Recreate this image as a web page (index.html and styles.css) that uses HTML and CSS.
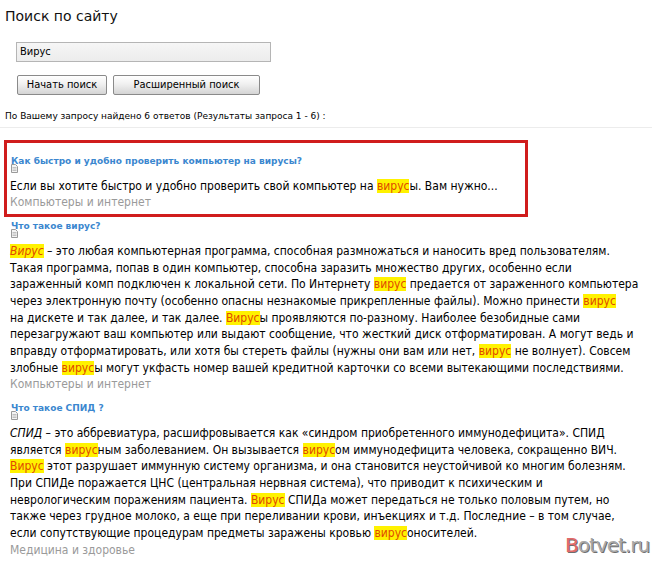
FILE: index.html
```html
<!DOCTYPE html>
<html lang="ru">
<head>
<meta charset="utf-8">
<title>Поиск по сайту</title>
<link rel="stylesheet" href="styles.css">
</head>
<body>
<div class="page">
  <h1 class="page-title">Поиск по сайту</h1>
  <form class="search-form">
    <div class="search-field">Вирус</div>
    <div class="search-buttons">
      <span class="btn btn-start">Начать поиск</span>
      <span class="btn btn-adv">Расширенный поиск</span>
    </div>
  </form>
  <p class="summary">По Вашему запросу найдено 6 ответов (Результаты запроса 1 - 6) :</p>
  <div class="separator"></div>

  <div class="results">
    <div class="result marked">
      <div class="result-title"><span class="doc-icon"><svg width="7" height="9" viewBox="0 0 7 9"><path d="M0.5 0.5h4l2 2v6h-6z" fill="#f4f4f4" stroke="#9a9a9a"/><path d="M1.5 3.5h4M1.5 5h4M1.5 6.5h4" stroke="#c0c0c0"/></svg></span>Как быстро и удобно проверить компьютер на вирусы?</div>
      <div class="result-text">Если вы хотите быстро и удобно проверить свой компьютер на <mark>вирус</mark>ы. Вам нужно...</div>
      <div class="result-cat">Компьютеры и интернет</div>
    </div>

    <div class="result">
      <div class="result-title"><span class="doc-icon"><svg width="7" height="9" viewBox="0 0 7 9"><path d="M0.5 0.5h4l2 2v6h-6z" fill="#f4f4f4" stroke="#9a9a9a"/><path d="M1.5 3.5h4M1.5 5h4M1.5 6.5h4" stroke="#c0c0c0"/></svg></span>Что такое вирус?</div>
      <div class="result-text"><mark><i>Вирус</i></mark> – это любая компьютерная программа, способная размножаться и наносить вред пользователям.<br>Такая программа, попав в один компьютер, способна заразить множество других, особенно если<br>зараженный комп подключен к локальной сети. По Интернету <mark>вирус</mark> предается от зараженного компьютера<br>через электронную почту (особенно опасны незнакомые прикрепленные файлы). Можно принести <mark>вирус</mark><br>на дискете и так далее, и так далее. <mark>Вирус</mark>ы проявляются по-разному. Наиболее безобидные сами<br>перезагружают ваш компьютер или выдают сообщение, что жесткий диск отформатирован. А могут ведь и<br>вправду отформатировать, или хотя бы стереть файлы (нужны они вам или нет, <mark>вирус</mark> не волнует). Совсем<br>злобные <mark>вирус</mark>ы могут укфасть номер вашей кредитной карточки со всеми вытекающими последствиями.</div>
      <div class="result-cat">Компьютеры и интернет</div>
    </div>

    <div class="result">
      <div class="result-title"><span class="doc-icon"><svg width="7" height="9" viewBox="0 0 7 9"><path d="M0.5 0.5h4l2 2v6h-6z" fill="#f4f4f4" stroke="#9a9a9a"/><path d="M1.5 3.5h4M1.5 5h4M1.5 6.5h4" stroke="#c0c0c0"/></svg></span>Что такое СПИД ?</div>
      <div class="result-text"><i>СПИД</i> – это аббревиатура, расшифровывается как «синдром приобретенного иммунодефицита». СПИД<br>является <mark>вирус</mark>ным заболеванием. Он вызывается <mark>вирус</mark>ом иммунодефицита человека, сокращенно ВИЧ.<br><mark>Вирус</mark> этот разрушает иммунную систему организма, и она становится неустойчивой ко многим болезням.<br>При СПИДе поражается ЦНС (центральная нервная система), что приводит к психическим и<br>неврологическим поражениям пациента. <mark>Вирус</mark> СПИДа может передаться не только половым путем, но<br>также через грудное молоко, а еще при переливании крови, инъекциях и т.д. Последние – в том случае,<br>если сопутствующие процедурам предметы заражены кровью <mark>вирус</mark>оносителей.</div>
      <div class="result-cat">Медицина и здоровье</div>
    </div>
  </div>
</div>
<div class="watermark"><span class="wm-b">B</span>otvet.ru</div>
</body>
</html>
```

FILE: styles.css
```css
html, body {
  margin: 0;
  padding: 0;
  background: #ffffff;
}
body {
  width: 652px;
  height: 561px;
  overflow: hidden;
  position: relative;
  font-family: "DejaVu Sans Condensed", "DejaVu Sans", sans-serif;
  color: #000;
}
.page {
  padding: 0 0 0 5px;
}
.page-title {
  margin: 0;
  padding-top: 5px;
  height: 22px;
  font-family: "DejaVu Sans", sans-serif;
  font-weight: normal;
  font-size: 14px;
  line-height: 22px;
  color: #111;
}
.search-form {
  margin: 15px 0 0 11px;
}
.search-field {
  width: 250px;
  height: 18px;
  border: 1px solid #b5b5b5;
  background: linear-gradient(#f6f6f6, #ececec);
  font-size: 11px;
  line-height: 18px;
  padding-left: 3px;
}
.search-buttons {
  display: flex;
  gap: 6px;
  margin-top: 13px;
  margin-left: 1px;
}
.btn {
  display: block;
  height: 18px;
  border: 1px solid #8a8a8a;
  border-radius: 2px;
  background: linear-gradient(#ffffff 0%, #f0f0f0 45%, #d4d4d4 100%);
  font-size: 11px;
  line-height: 18px;
  text-align: center;
  color: #000;
}
.btn-start { width: 88px; }
.btn-adv { width: 145px; }
.summary {
  margin: 15px 0 0 0;
  font-family: "DejaVu Sans", sans-serif;
  font-size: 9px;
  line-height: 12px;
}
.separator {
  margin: 5px 0 0 -5px;
  height: 1px;
  background: #ececec;
}
.results {
  margin-top: 25px;
}
.result {
  position: relative;
  padding-left: 5px;
  margin-bottom: 7px;
}
.result.marked::before {
  content: "";
  position: absolute;
  top: -13px;
  bottom: -6px;
  left: -1px;
  width: 518px;
  border: 3px solid #d01c1c;
}
.result-title {
  position: relative;
  font-family: "DejaVu Sans", sans-serif;
  font-weight: bold;
  font-size: 9px;
  line-height: 16.7px;
  color: #3b87cf;
  padding-left: 1px;
  margin-bottom: 8px;
}
.doc-icon {
  position: absolute;
  left: 1px;
  top: 11px;
  line-height: 0;
}
.result-text {
  font-size: 12px;
  line-height: 16.7px;
  white-space: nowrap;
}
.result-cat {
  font-size: 12px;
  line-height: 16.7px;
  color: #9a9a9a;
}
mark {
  background: #fff200;
  color: #e04a00;
  padding: 0;
}
.watermark {
  position: absolute;
  left: 565px;
  top: 533px;
  font-family: "DejaVu Sans", sans-serif;
  font-size: 20px;
  letter-spacing: -1px;
  color: #a9a9a9;
  text-shadow: 1px 1px 0 #6e6e6e;
}
.wm-b {
  color: #e26a6a;
}
```
